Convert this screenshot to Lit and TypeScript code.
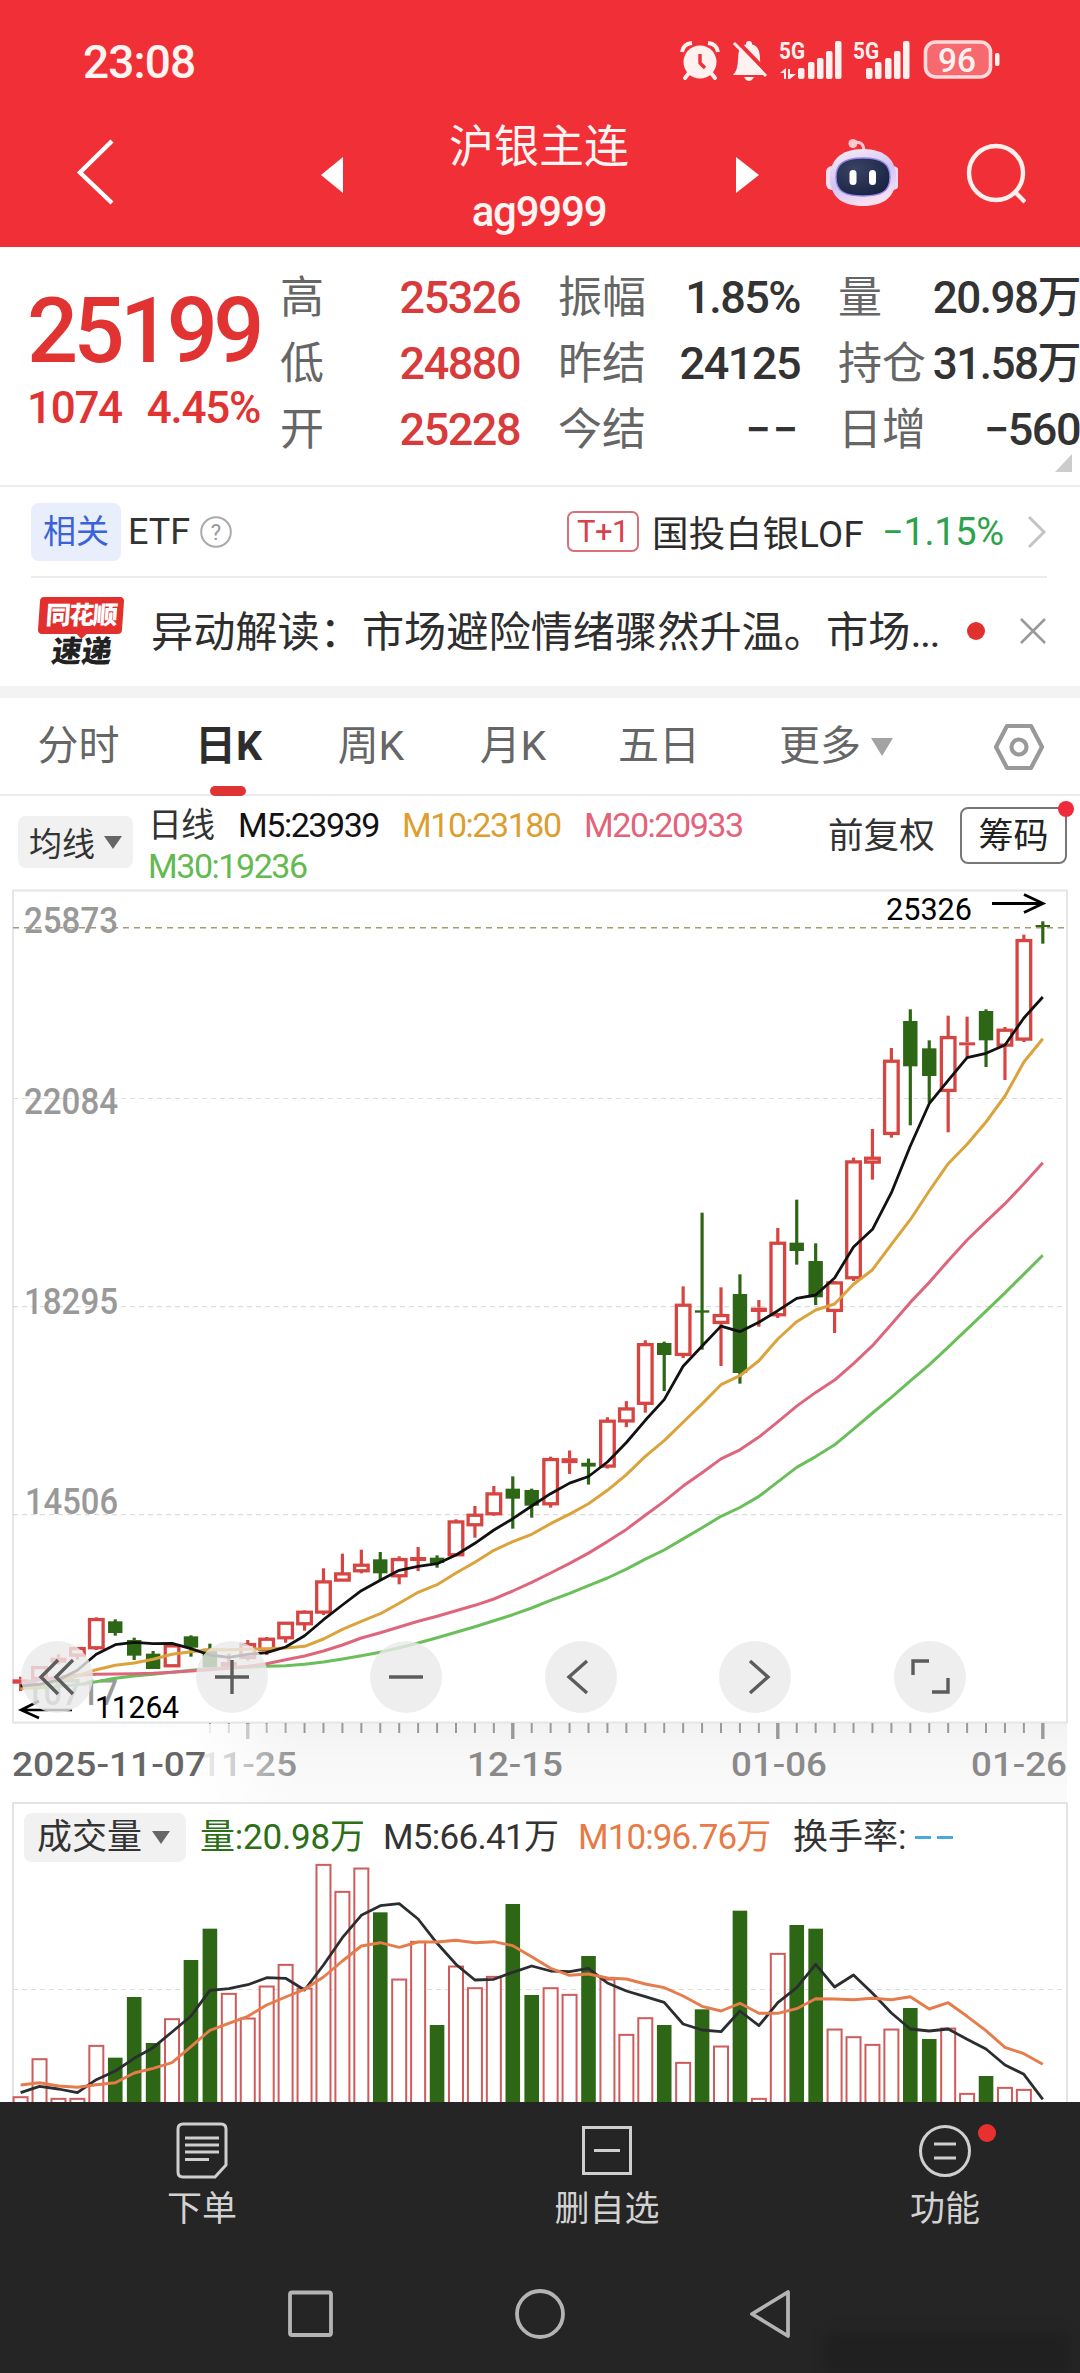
import { LitElement, html, svg, css } from "lit";
import { customElement } from "lit/decorators.js";

const STEP = 18.93;
const X0 = 20.6;
const px = (i: number) => X0 + i * STEP;

type Candle = [string, number, number, number, number];
// kind, high, body top, body bottom, low — in page pixels
const left = (k: string, a: number, b: number, c: number, d: number): Candle =>
  [k, 1380 + a / 3, 1380 + b / 3, 1380 + c / 3, 1380 + d / 3];
const mid = (k: string, a: number, b: number, c: number, d: number): Candle =>
  [k, 1200 + a / 2.613, 1200 + b / 2.613, 1200 + c / 2.613, 1200 + d / 2.613];
const right = (k: string, a: number, b: number, c: number, d: number): Candle =>
  [k, 880 + a / 3, 880 + b / 3, 880 + c / 3, 880 + d / 3];

const CANDLES: Candle[] = [
  left("r", 887, 895, 908, 930), left("r", 855, 857, 895, 897), left("r", 820, 830, 845, 850),
  left("r", 798, 800, 825, 836), left("r", 709, 713, 803, 807), left("g", 715, 721, 756, 764),
  left("g", 770, 777, 824, 837), left("g", 810, 818, 864, 864), left("r", 790, 792, 857, 857),
  left("g", 763, 766, 800, 827), left("g", 788, 803, 860, 860), left("r", 818, 843, 858, 860),
  left("r", 777, 788, 832, 838), left("r", 768, 772, 808, 822), left("r", 724, 724, 773, 785),
  left("r", 688, 691, 731, 749), left("r", 562, 600, 696, 702), left("r", 518, 576, 600, 600),
  left("r", 506, 550, 572, 577), left("g", 513, 535, 577, 598), left("r", 526, 533, 587, 610),
  left("r", 498, 528, 540, 570), left("g", 523, 530, 546, 560), left("r", 415, 420, 524, 524),
  left("r", 375, 400, 434, 470), left("r", 315, 336, 401, 404), left("g", 286, 323, 353, 443),
  left("g", 323, 327, 374, 410), left("r", 227, 233, 371, 380),
  mid("r", 652, 672, 685, 713), mid("g", 673, 684, 694, 741), mid("r", 565, 573, 695, 699),
  mid("r", 523, 541, 577, 591), mid("r", 364, 373, 531, 553),
  right("g", 1382, 1386, 1422, 1530), right("r", 1216, 1270, 1423, 1431), right("g", 995, 1288, 1295, 1406),
  right("r", 1219, 1301, 1327, 1455), right("g", 1180, 1239, 1476, 1508), right("r", 1257, 1280, 1293, 1337),
  right("r", 1041, 1084, 1304, 1311), right("g", 956, 1085, 1110, 1151), right("g", 1087, 1140, 1249, 1272),
  right("r", 1200, 1203, 1291, 1356), right("r", 830, 840, 1193, 1200), right("r", 744, 829, 846, 896),
  right("r", 501, 538, 760, 770), right("g", 385, 420, 556, 733), right("g", 478, 502, 585, 665),
  right("r", 404, 467, 631, 754), right("r", 407, 484, 493, 530), right("g", 385, 390, 478, 558),
  right("r", 438, 445, 495, 597), right("r", 161, 176, 477, 483), right("g", 121, 132, 138, 188),
];

const series = (a: number[], b: number[], c: number[]) => [
  ...a.map((v) => 1380 + v / 3), ...b.map((v) => 1200 + v / 2.613), ...c.map((v) => 880 + v / 3),
];
const M5 = series(
  [915, 910, 897, 868, 820, 791, 784, 788, 787, 803, 822, 829, 820, 815, 798, 764, 716, 672, 629, 598, 568, 556, 548, 522, 487, 447, 413, 375, 338],
  [737, 720, 682, 631, 573, 519, 432, 379, 327],
  [1352, 1324, 1289, 1252, 1242, 1191, 1098, 1045, 935, 795, 668, 598, 530, 517, 492, 411, 348]);
const M10 = series(
  [922, 915, 900, 885, 866, 853, 846, 835, 820, 812, 806, 806, 804, 803, 801, 796, 774, 745, 721, 698, 667, 634, 611, 576, 544, 508, 482, 460, 428],
  [818, 791, 756, 715, 667, 626, 578, 530, 480],
  [1484, 1439, 1374, 1322, 1287, 1269, 1210, 1166, 1090, 1016, 930, 848, 790, 723, 645, 543, 473]);
const M20 = series(
  [905, 896, 888, 883, 880, 879, 878, 877, 874, 870, 866, 862, 856, 848, 836, 825, 810, 792, 771, 755, 738, 721, 706, 689, 673, 654, 630, 604, 576],
  [947, 920, 890, 858, 821, 785, 745, 710, 674, 650, 617, 577, 536, 500, 468, 425, 378, 322, 265, 213],
  [1139, 1077, 1022, 968, 908, 845]);
const M30 = series(
  [922, 920, 916, 911, 902, 892, 885, 880, 874, 868, 863, 861, 859, 856, 854, 850, 843, 834, 824, 814, 800, 786, 770, 754, 737, 719, 701, 681, 658],
  [1025, 1005, 985, 962, 936, 912, 883, 854, 824, 801, 772, 734, 696, 668, 637, 596, 554, 513, 470, 428, 382, 335, 288, 240, 191, 142], []);

const VOL = [948, 834, 953, 953, 794, 830, 648, 786, 714, 537, 443, 638, 712, 616, 551, 622, 251, 332, 262, 394, 595, 482, 732, 556, 621, 587, 369, 642, 621, 641, 525, 595, 761, 711, 732, 845, 685, 796, 389, 953, 518, 432, 443, 745, 768, 791, 745, 681, 774, 742, 938, 885, 920, 926];
const V5 = [935, 916, 924, 935, 896, 870, 832, 800, 753, 705, 628, 623, 611, 590, 592, 627, 552, 470, 403, 374, 368, 414, 487, 550, 597, 595, 574, 555, 570, 572, 562, 606, 630, 647, 664, 729, 747, 752, 690, 734, 665, 620, 550, 618, 582, 637, 696, 744, 750, 744, 775, 804, 852, 880, 955];
const V10 = [912, 905, 915, 919, 911, 905, 876, 862, 845, 797, 748, 727, 706, 672, 648, 625, 588, 540, 495, 485, 499, 483, 483, 478, 485, 482, 494, 527, 562, 583, 579, 591, 594, 609, 620, 645, 676, 690, 667, 697, 697, 683, 653, 654, 656, 652, 656, 647, 684, 665, 706, 749, 799, 818, 850];

const line = (vals: number[], color: string, w = 3) =>
  svg`<polyline points=${vals.map((v, i) => `${px(i).toFixed(1)},${v.toFixed(1)}`).join(" ")} fill="none" stroke=${color} stroke-width=${w} stroke-linejoin="round" />`;

const RED = "#d64541";
const GREEN = "#2d6615";

const candle = ([k, h, t, b, l]: Candle, i: number) => {
  const x = px(i);
  if (k === "g") {
    return svg`<line x1=${x} x2=${x} y1=${h} y2=${l} stroke=${GREEN} stroke-width="3.2" />
      <rect x=${x - 7.2} y=${t} width="14.4" height=${Math.max(b - t, 2)} fill=${GREEN} />`;
  }
  const tall = b - t > 5;
  return svg`<line x1=${x} x2=${x} y1=${h} y2=${t} stroke=${RED} stroke-width="3.2" />
    <line x1=${x} x2=${x} y1=${b} y2=${l} stroke=${RED} stroke-width="3.2" />
    ${tall
      ? svg`<rect x=${x - 6.8} y=${t + 0.9} width="13.6" height=${b - t - 1.8} fill="#fff" stroke=${RED} stroke-width="3.3" />`
      : svg`<rect x=${x - 8} y=${t} width="16" height=${b - t} fill=${RED} />`}`;
};

const label = (x: number, y: number, w: number, size: number, cls: string, t: string) =>
  svg`<text x=${x} y=${y} font-size=${size} class=${cls} textLength=${w} lengthAdjust="spacingAndGlyphs">${t}</text>`;

@customElement("kline-chart")
class KlineChart extends LitElement {
  static styles = css`
    :host { display: block; position: relative; height: 913px; }
    svg { display: block; }
    text { font-family: Roboto, "Liberation Sans", sans-serif; }
    .axis { fill: #999; font-weight: 500; }
    .date { fill: #8a8a8a; font-weight: 500; }
    .start { fill: #666; font-weight: 500; }
    .mark { fill: #000; }
    .controls { position: absolute; left: 21px; right: 114px; top: 752px; display: flex; justify-content: space-between; }
    .btn { width: 72px; height: 72px; border-radius: 50%; background: rgba(234, 234, 234, 0.8); }
    .btn path { fill: none; stroke: #5c5c5c; stroke-width: 3.4; }
  `;
  render() {
    const grid = [1097.5, 1305.7, 1513.7];
    const ticks = Array.from({ length: 45 }, (_, n) => n + 10);
    const major = [12, 26, 40, 54];
    const icons = [
      "M37 19 L20 36 L37 53 M52 19 L35 36 L52 53",
      "M19 36 H53 M36 19 V53",
      "M19 36 H53",
      "M42 20 L24 36 L42 52",
      "M31 20 L49 36 L31 52",
      "M19 34 V20 H35 M54 37 V51 H38",
    ];
    return html`
      <svg width="1080" height="913" viewBox="0 888 1080 913">
        <defs>
          <linearGradient id="band" x1="0" y1="0" x2="0" y2="1">
            <stop offset="0" stop-color="#f2f2f2" /><stop offset="0.5" stop-color="#f8f8f8" /><stop offset="1" stop-color="#fafafa" />
          </linearGradient>
          <linearGradient id="fade" x1="0" y1="0" x2="1" y2="0">
            <stop offset="0" stop-color="#fff" /><stop offset="0.62" stop-color="#fff" stop-opacity="0.95" /><stop offset="1" stop-color="#fff" stop-opacity="0" />
          </linearGradient>
        </defs>
        <rect x="13" y="1722" width="1054" height="79" fill="url(#band)" />
        <rect x="13" y="889.5" width="1054" height="832" fill="#fff" stroke="#e6e6e6" stroke-width="2" />
        ${grid.map((y) => svg`<line x1="13" x2="1067" y1=${y} y2=${y} stroke="#dcdcdc" stroke-width="1.2" stroke-dasharray="5 4" />`)}
        <line x1="13" x2="1067" y1="926.7" y2="926.7" stroke="#a89a6c" stroke-width="1.6" stroke-dasharray="6 5" />
        ${label(24, 932, 94, 36, "axis", "25873")}
        ${label(24, 1113, 94, 36, "axis", "22084")}
        ${label(24, 1313, 94, 36, "axis", "18295")}
        ${label(25, 1513, 93, 36, "axis", "14506")}
        ${label(25, 1704, 93, 36, "axis", "10717")}
        ${CANDLES.map(candle)}
        ${line(M30, "#6abf5a")}${line(M20, "#de667c")}${line(M10, "#dba33c")}${line(M5, "#111", 2.8)}
        ${label(886, 919, 86, 31, "mark", "25326")}
        <path d="M992 902.500 H1043 M1024 893.500 L1043 902.500 L1024 911.500" fill="none" stroke="#000" stroke-width="2.800" />
        ${label(95, 1716.5, 84, 31, "mark", "11264")}
        <path d="M72 1709 H21 M39 1700 L21 1709 L39 1717" fill="none" stroke="#000" stroke-width="2.600" />
        ${ticks.map((i) => svg`<line x1=${px(i)} x2=${px(i)} y1="1722" y2=${major.includes(i) ? 1738 : 1732} stroke="#999" stroke-width=${major.includes(i) ? 3.4 : 2} />`)}
        ${label(200, 1775, 97, 34, "date", "11-25")}
        <rect x="12" y="1723" width="290" height="78" fill="url(#fade)" />
        ${label(12, 1775, 194, 34, "start", "2025-11-07")}
        ${label(467, 1775, 96, 34, "date", "12-15")}
        ${label(731, 1775, 96, 34, "date", "01-06")}
        ${label(971, 1775, 96, 34, "date", "01-26")}
      </svg>
      <div class="controls">
        ${icons.map((d) => html`<svg class="btn" viewBox="0 0 72 72"><path d=${d} /></svg>`)}
      </div>
    `;
  }
}

@customElement("volume-chart")
class VolumeChart extends LitElement {
  static styles = css`
    :host { display: block; position: relative; height: 300px; overflow: hidden; }
    svg { display: block; }
    .head { position: absolute; left: 24px; top: 11px; display: flex; align-items: center; height: 49px; font: 400 35px/49px Roboto, "Noto Sans CJK SC", sans-serif; color: #333; white-space: nowrap; }
    .pill { width: 149px; height: 49px; padding-left: 13px; margin-right: 14px; border-radius: 8px; background: #f1f1f1; display: flex; align-items: center; gap: 10px; }
    .tri { width: 0; height: 0; border: 9px solid transparent; border-top: 13px solid #666; border-bottom: 0; }
    .item { letter-spacing: -0.9px; }
    .vol { color: #2d6f16; width: 183px; letter-spacing: -0.2px; }
    .m5 { width: 195px; letter-spacing: -0.7px; }
    .m10 { color: #e87a45; width: 215px; }
    .rate { letter-spacing: 0; width: 122px; }
    .none { display: flex; gap: 6px; }
    .dash { width: 16px; height: 3px; background: #4aa9de; }
  `;
  render() {
    return html`
      <svg width="1080" height="300" viewBox="0 1801 1080 300">
        <path d="M13 2110 V1802 H1067 V2110" fill="#fff" stroke="#e4e4e4" stroke-width="2" />
        <line x1="13" x2="1067" y1="1988.5" y2="1988.5" stroke="#dcdcdc" stroke-width="1.2" stroke-dasharray="5 4" />
        ${VOL.map((v, i) => {
          const y = 1780 + v / 3;
          const x = px(i);
          return CANDLES[i][0] === "g"
            ? svg`<rect x=${x - 7.3} y=${y} width="14.6" height=${2110 - y} fill=${GREEN} />`
            : svg`<rect x=${x - 7} y=${y + 0.2} width="14" height=${2110 - y} fill="#fff" stroke="#cf5b5b" stroke-width="2" />`;
        })}
        ${line(V5.map((v) => 1780 + v / 3), "#2b2e30", 2.8)}
        ${line(V10.map((v) => 1780 + v / 3), "#e67c4b", 2.9)}
      </svg>
      <div class="head">
        <div class="pill">成交量<i class="tri"></i></div>
        <span class="item vol">量:20.98万</span>
        <span class="item m5">M5:66.41万</span>
        <span class="item m10">M10:96.76万</span>
        <span class="item rate">换手率:</span>
        <span class="none"><i class="dash"></i><i class="dash"></i></span>
      </div>
    `;
  }
}

const statusIcons = html`
  <svg class="status" width="330" height="44" viewBox="680 40 330 44" fill="#fff1f0">
    <circle cx="700" cy="63" r="16.500" /><path d="M700 55 V64 L705 69" stroke="#f12f36" stroke-width="3.400" fill="none" />
    <path d="M682 53 Q683 45 692 44 M718 53 Q717 45 708 44" stroke="#fff1f0" stroke-width="4" fill="none" />
    <path d="M689 74 L685 79 M711 74 L715 79" stroke="#fff1f0" stroke-width="4" stroke-linecap="round" />
    <path d="M733 76 Q738 71 738 60 Q738 45 749 45 Q760 45 760 60 Q760 71 765 76 Z" />
    <circle cx="749" cy="45" r="3" /><path d="M744 78 H754 Q752 82 749 82 Q746 82 744 78 Z" />
    <path d="M737 42 L769 75" stroke="#f12f36" stroke-width="4" /><path d="M734 44 L766 77" stroke="#fff1f0" stroke-width="3" />
    <text x="779" y="59.500" font-size="24" font-weight="700" textLength="26" lengthAdjust="spacingAndGlyphs">5G</text>
    <text x="853" y="59.500" font-size="24" font-weight="700" textLength="26" lengthAdjust="spacingAndGlyphs">5G</text>
    <path d="M780 74 L786 69 V80 H784 V74 Z M788 70 H790 V75 H796 L790 80 H788 Z" />
    ${[[798, 69], [808, 63], [817, 59], [826, 52], [835, 42]].map(([x, y]) => svg`<rect x=${x} y=${y} width="6.5" height=${80 - y} rx="2" />`)}
    ${[[866, 69], [875, 63], [885, 59], [894, 52], [903, 42]].map(([x, y]) => svg`<rect x=${x} y=${y} width="6.5" height=${80 - y} rx="2" />`)}
    <rect x="925.5" y="43" width="65" height="35" rx="10" fill="#f5696f" stroke="#fdd9da" stroke-width="3.600" />
    <rect x="995" y="54" width="4.500" height="13" rx="2" />
    <text x="938" y="73" font-size="34" font-weight="500" textLength="38" lengthAdjust="spacingAndGlyphs">96</text>
  </svg>`;

const robot = html`
  <svg width="80" height="80" viewBox="816 134 80 80">
    <defs><linearGradient id="shell" x1="0" y1="0" x2="0.4" y2="1"><stop offset="0" stop-color="#fdeef6" /><stop offset="0.6" stop-color="#cfc4f4" /><stop offset="1" stop-color="#f6dff0" /></linearGradient>
    <radialGradient id="face" cx="0.35" cy="0.3" r="0.8"><stop offset="0" stop-color="#3a4364" /><stop offset="1" stop-color="#18213f" /></radialGradient></defs>
    <path d="M851 142 Q861 139 862 149" stroke="#ffc9cf" stroke-width="3" fill="none" /><circle cx="851" cy="142.5" r="4.5" fill="#ffc9cf" />
    <rect x="824" y="165" width="12" height="24" rx="6" fill="#f4def0" /><rect x="885" y="165" width="12" height="24" rx="6" fill="#eadcf4" />
    <path d="M861 148 C884 148 894 160 894 176 C894 196 882 205 861 205 C840 205 828 196 828 176 C828 160 838 148 861 148 Z" fill="url(#shell)" />
    <path d="M861 157 C880 157 888 163 888 176 C888 190 880 195 861 195 C842 195 834 190 834 176 C834 163 842 157 861 157 Z" fill="url(#face)" stroke="#8f86ea" stroke-width="1.4" />
    <rect x="847.5" y="169" width="7" height="15" rx="3.5" fill="#fff" /><rect x="867" y="169" width="7" height="15" rx="3.5" fill="#fff" />
  </svg>`;

const QUOTE = [
  ["高", "25326", "振幅", "1.85%", "量", "20.98万"],
  ["低", "24880", "昨结", "24125", "持仓", "31.58万"],
  ["开", "25228", "今结", "−−", "日增", "−560"],
];

@customElement("app-root")
class AppRoot extends LitElement {
  static styles = css`
    :host { display: block; width: 1080px; height: 2373px; overflow: hidden; background: #fff; font-family: Roboto, "Noto Sans CJK SC", sans-serif; color: #333; white-space: nowrap; }
    * { box-sizing: border-box; }
    svg { display: block; flex: none; }
    i { display: block; flex: none; }
    .top { height: 247px; background: #f12f36; color: #fff4f2; }
    .bar { height: 84px; padding: 39px 70px 0 83px; display: flex; justify-content: space-between; align-items: flex-start; }
    .clock { font-size: 46px; font-weight: 500; line-height: 46px; letter-spacing: -0.9px; }
    .nav { height: 163px; display: grid; grid-template-columns: 321px 22px 392px 24px 57px 80px 184px; align-items: center; }
    .back { margin-left: 74px; margin-top: 12px; }
    .arrow { margin-top: 18px; }
    .title { display: flex; flex-direction: column; align-items: center; padding-top: 26px; }
    .name { font-size: 45px; line-height: 64px; }
    .code { font-size: 42px; line-height: 60px; letter-spacing: -1.2px; margin-top: 2px; font-weight: 500; }
    .robot { grid-column: 6; margin-top: 18px; margin-left: 2px; }
    .search { margin: 16px 0 0 66px; }
    .quote { height: 240px; border-bottom: 2px solid #ececec; display: flex; position: relative; }
    .price { width: 280px; padding: 31px 0 0 27px; color: #e03332; font-weight: 500; }
    .last { font-size: 90px; line-height: 108px; letter-spacing: -4.6px; }
    .chg { font-size: 44px; line-height: 50px; letter-spacing: -1.3px; display: flex; gap: 25px; margin-top: -3px; }
    .stats { flex: 1; padding-top: 18px; display: grid; grid-template-columns: 70px 170px 38px 100px 142px 38px 88px 154px; grid-auto-rows: 66px; font-size: 45px; line-height: 66px; }
    .k { color: #666; font-size: 44px; }
    .v { text-align: right; font-weight: 500; letter-spacing: -1.5px; }
    .v.w { letter-spacing: -1.5px; font-size: 44px; }
    .v.none { letter-spacing: 2px; }
    .up { color: #d83b3b; }
    .c3 { grid-column: 4; } .c5 { grid-column: 7; }
    .fold { position: absolute; right: 8px; bottom: 13px; width: 17px; height: 18px; background: #ccc; clip-path: polygon(100% 0, 100% 100%, 0 100%); }
    .etf { height: 91px; margin: 0 33px 0 31px; border-bottom: 2px solid #ebebeb; display: flex; align-items: center; font-size: 36px; }
    .tag { width: 90px; height: 58px; line-height: 57px; border-radius: 8px; text-align: center; background: #e8eefc; color: #3b62d8; font-size: 33px; margin-right: 7px; }
    .q { margin-left: 9px; }
    .push { margin-left: auto; width: 72px; height: 41px; border: 2px solid #d9707a; border-radius: 7px; color: #d8404c; font-size: 31px; line-height: 37px; text-align: center; margin-right: 13px; letter-spacing: -0.5px; }
    .fund { letter-spacing: 0.3px; width: 230px; color: #2c2c2c; font-size: 36.5px; }
    .down { color: #2ca24c; font-size: 38px; width: 145px; letter-spacing: -0.3px; }
    .news { height: 108px; padding-left: 38px; display: flex; align-items: center; }
    .brand { width: 88px; margin-right: 25px; padding-top: 2px; }
    .b1 { height: 37px; width: 84px; margin-left: 1px; background: #e2302f; color: #fff; border-radius: 4px; transform: skewX(-4deg); text-align: center; font-size: 25px; line-height: 37px; font-weight: 800; letter-spacing: -1.5px; position: relative; }
    .b1::after { content: ""; position: absolute; left: 38px; top: 36px; border: 6px solid transparent; border-top-color: #e2302f; border-bottom: 0; }
    .b2 { color: #222; font-size: 30px; font-weight: 900; line-height: 36px; transform: skewX(-8deg); text-align: center; }
    .headline { font-size: 42.2px; width: 816px; color: #2e2e2e; padding-bottom: 7px; }
    .ell { letter-spacing: -1.6px; }
    .dot { width: 18px; height: 18px; border-radius: 50%; background: #e2302f; margin-top: -2px; }
    .close { margin-left: 35px; margin-top: -2px; }
    .band { height: 12px; background: #f3f3f3; }
    .tabs { height: 98px; border-bottom: 2px solid #ececec; display: grid; grid-template-columns: 157px 143px 142px 142px 150px 137px 122px 85px; align-items: center; font-size: 41px; color: #666; }
    .tab { text-align: center; position: relative; line-height: 97px; }
    .tab.last-tab { text-align: right; padding-right: 10px; }
    .on { color: #2d2d2d; font-weight: 700; }
    .on::after { content: ""; position: absolute; left: 53px; bottom: -1px; width: 36px; height: 10px; border-radius: 5px; background: #e03434; }
    .more { width: 0; height: 0; border: 11px solid transparent; border-top: 18px solid #a3a3a3; border-bottom: 0; }
    .ma { height: 93px; display: flex; position: relative; }
    .pill { margin: 20px 15px 0 18px; width: 115px; height: 52px; border-radius: 8px; background: #f1f1f1; display: flex; align-items: center; padding-left: 11px; gap: 9px; font-size: 33px; }
    .tri { width: 0; height: 0; border: 9px solid transparent; border-top: 13px solid #666; border-bottom: 0; }
    .vals { width: 680px; font-size: 34px; line-height: 41px; padding-top: 9px; letter-spacing: -1.45px; }
    .row { display: flex; }
    .p0 { width: 90px; letter-spacing: -1px; } .p1 { width: 164px; color: #111; } .p2 { width: 182px; color: #dc9f2f; } .p3 { color: #e2637a; } .p4 { color: #62ba50; }
    .adj { font-size: 35.6px; line-height: 81px; width: 132px; }
    .chip { margin-top: 11px; width: 107px; height: 57px; border: 2px solid #777; border-radius: 8px; text-align: center; font-size: 35px; line-height: 55px; color: #222; position: relative; }
    .chip::after { content: ""; position: absolute; right: -9px; top: -8px; width: 16px; height: 16px; border-radius: 50%; background: #f02a3a; }
    .foot { height: 272px; background: #252525; position: relative; }
    .acts { height: 146px; padding-top: 19px; display: grid; grid-template-columns: 404px 406px 270px; font-size: 35px; color: #d2d2d2; }
    .act { display: flex; flex-direction: column; align-items: center; gap: 5px; line-height: 48px; }
    .sys { height: 126px; padding: 37px 288px 0; display: flex; justify-content: space-between; }
    .smudge { position: absolute; right: 10px; bottom: 0; width: 245px; height: 42px; background: #202020; filter: blur(6px); }
  `;
  render() {
    return html`
      <header class="top">
        <div class="bar"><span class="clock">23:08</span>${statusIcons}</div>
        <div class="nav">
          <svg class="back" width="44" height="70" viewBox="0 0 44 70"><path d="M38 4 L6 35.500 L38 66" fill="none" stroke="#fff" stroke-width="4.400" /></svg>
          <svg class="arrow" width="22" height="36" viewBox="0 0 22 36"><path d="M22 0 V36 L0 18 Z" fill="#fff" /></svg>
          <div class="title"><span class="name">沪银主连</span><span class="code">ag9999</span></div>
          <svg class="arrow" width="24" height="36" viewBox="0 0 24 36"><path d="M1 0 V36 L24 18 Z" fill="#fff" /></svg>
          <div class="robot">${robot}</div>
          <svg class="search" width="64" height="64" viewBox="960 142 64 64"><g fill="none" stroke="#fff0ee" stroke-width="4.400"><circle cx="994" cy="173" r="27" /><path d="M1013 192 L1023 202" /></g></svg>
        </div>
      </header>
      <section class="quote">
        <div class="price"><div class="last">25199</div><div class="chg"><span>1074</span><span>4.45%</span></div></div>
        <div class="stats">
          ${QUOTE.map((r) => html`
            <span class="k">${r[0]}</span><span class="v up">${r[1]}</span>
            <span class="k c3">${r[2]}</span><span class="v ${r[3] === "−−" ? "none" : ""}">${r[3]}</span>
            <span class="k c5">${r[4]}</span><span class="v ${r[5].endsWith("万") ? "w" : ""}">${r[5]}</span>`)}
        </div>
        <i class="fold"></i>
      </section>
      <section class="etf">
        <span class="tag">相关</span><span>ETF</span>
        <svg class="q" width="34" height="34" viewBox="0 0 34 34"><circle cx="17" cy="17" r="14.800" fill="none" stroke="#aaa" stroke-width="2" /><text x="17" y="25" font-size="22" fill="#999" text-anchor="middle">?</text></svg>
        <span class="push">T+1</span><span class="fund">国投白银LOF</span><span class="down">−1.15%</span>
        <svg width="20" height="36" viewBox="0 0 20 36"><path d="M2 3 L17 18 L2 33" fill="none" stroke="#c4c4c4" stroke-width="3" /></svg>
      </section>
      <section class="news">
        <div class="brand"><div class="b1">同花顺</div><div class="b2">速递</div></div>
        <span class="headline">异动解读：市场避险情绪骤然升温。市场<span class="ell">...</span></span>
        <i class="dot"></i>
        <svg class="close" width="26" height="26" viewBox="0 0 26 26"><path d="M1 1 L25 25 M25 1 L1 25" stroke="#999" stroke-width="2.600" /></svg>
      </section>
      <div class="band"></div>
      <nav class="tabs">
        <span class="tab">分时</span><span class="tab on">日K</span><span class="tab">周K</span><span class="tab">月K</span><span class="tab">五日</span><span class="tab last-tab">更多</span>
        <i class="more"></i>
        <svg width="52" height="50" viewBox="0 0 52 50"><g fill="none" stroke="#999" stroke-width="4.200"><path d="M14 4 H38 L49 25 L38 46 H14 L3 25 Z" stroke-linejoin="round" /><circle cx="26" cy="25" r="7.500" /></g></svg>
      </nav>
      <section class="ma">
        <div class="pill">均线<i class="tri"></i></div>
        <div class="vals">
          <div class="row"><span class="p0">日线</span><span class="p1">M5:23939</span><span class="p2">M10:23180</span><span class="p3">M20:20933</span></div>
          <div class="p4">M30:19236</div>
        </div>
        <span class="adj">前复权</span><span class="chip">筹码</span>
      </section>
      <kline-chart></kline-chart>
      <volume-chart></volume-chart>
      <footer class="foot">
        <div class="acts">
          <div class="act">
            <svg width="66" height="60" viewBox="0 0 66 60" fill="none" stroke="#cfcfcf" stroke-width="3"><path d="M14 3 H52 Q57 3 57 8 V44 L46 56 H14 Q9 56 9 51 V8 Q9 3 14 3 Z" /><path d="M16 17 H50 M16 24 H50 M16 31 H50 M16 38.500 H40" /></svg>
            <span>下单</span></div>
          <div class="act">
            <svg width="66" height="60" viewBox="0 0 66 60" fill="none" stroke="#cfcfcf" stroke-width="3"><rect x="9.500" y="6.500" width="47" height="46" /><path d="M20 29.500 H46" /></svg>
            <span>删自选</span></div>
          <div class="act">
            <svg width="104" height="60" viewBox="0 0 104 60" fill="none" stroke="#cfcfcf" stroke-width="3"><circle cx="52" cy="30" r="24.500" /><path d="M41 23 H63 M41 37 H63" /><circle cx="94" cy="12" r="9" fill="#e8312f" stroke="none" /></svg>
            <span>功能</span></div>
        </div>
        <div class="sys">
          <svg width="46" height="60" viewBox="0 0 46 60"><rect x="2" y="7.500" width="41" height="42.500" rx="2" fill="none" stroke="#b4b4b4" stroke-width="3.800" /></svg>
          <svg width="52" height="60" viewBox="0 0 52 60"><circle cx="26" cy="29" r="23" fill="none" stroke="#b4b4b4" stroke-width="3.800" /></svg>
          <svg width="46" height="60" viewBox="0 0 46 60"><path d="M42 7 V51 L6 29 Z" fill="none" stroke="#b4b4b4" stroke-width="3.800" stroke-linejoin="round" /></svg>
        </div>
        <i class="smudge"></i>
      </footer>
    `;
  }
}
